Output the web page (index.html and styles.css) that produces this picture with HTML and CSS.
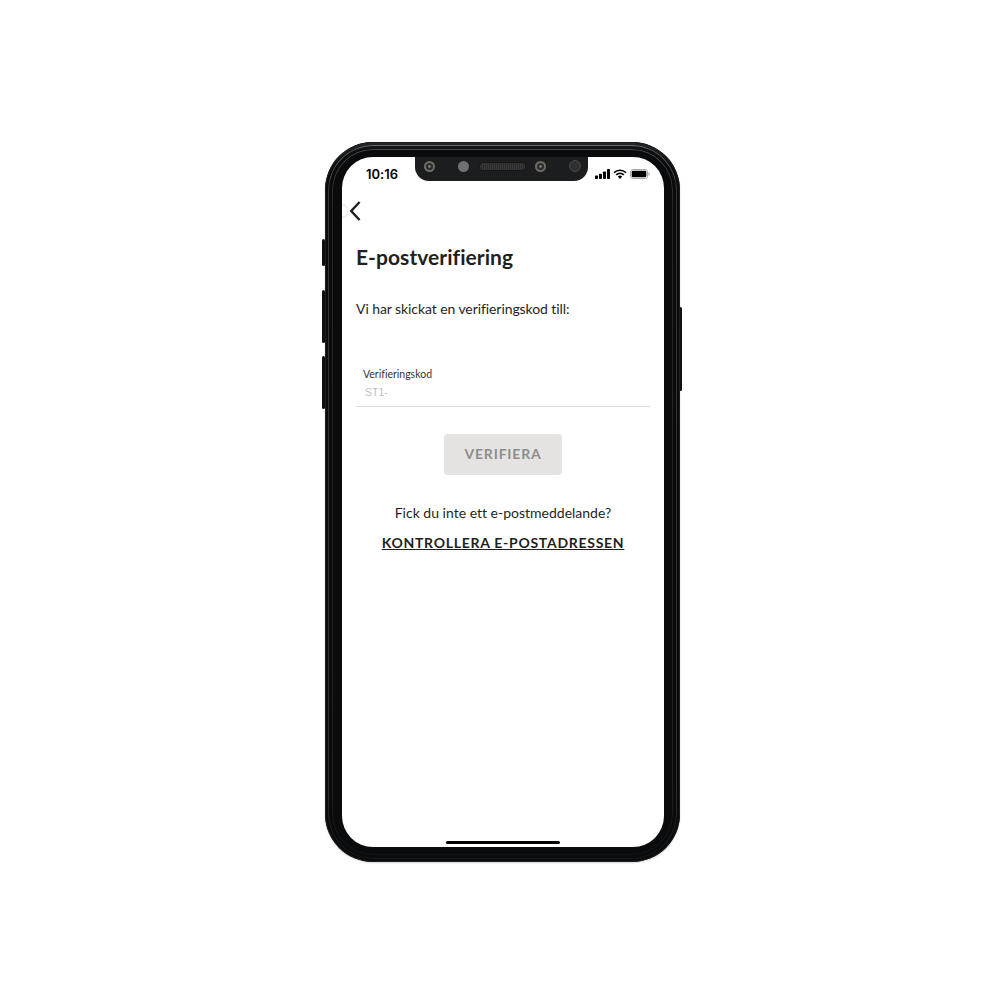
FILE: index.html
```html
<!DOCTYPE html>
<html lang="sv">
<head>
<meta charset="utf-8">
<title>E-postverifiering</title>
<link rel="stylesheet" href="styles.css">
</head>
<body>
<div class="phone">
  <span class="side-btn btn-a"></span>
  <span class="side-btn btn-b"></span>
  <span class="side-btn btn-c"></span>
  <span class="side-btn btn-d"></span>
  <div class="bezel">
    <div class="screen">
      <div class="notch">
        <span class="lens lens-ring"><i></i></span>
        <span class="lens lens-grey"></span>
        <span class="speaker"></span>
        <span class="lens lens-ring lens-ring-b"><i></i></span>
        <span class="lens lens-dark"></span>
      </div>
      <div class="status">
        <span class="time">10:16</span>
        <span class="status-icons">
          <svg width="15" height="10" viewBox="0 0 15 10"><rect x="0" y="6.5" width="3" height="3.5" rx=".7"/><rect x="4" y="4.7" width="3" height="5.3" rx=".7"/><rect x="8" y="2.5" width="3" height="7.5" rx=".7"/><rect x="12" y="0" width="3" height="10" rx=".7"/></svg>
          <svg width="14" height="10" viewBox="0 0 14 10"><path d="M7 10 4.8 7.6a3.2 3.2 0 0 1 4.4 0Z"/><path d="M1 3.6a8.8 8.8 0 0 1 12 0" fill="none" stroke="#000" stroke-width="1.6"/><path d="M3.2 5.9a5.6 5.6 0 0 1 7.6 0" fill="none" stroke="#000" stroke-width="1.6"/></svg>
          <svg width="20" height="10" viewBox="0 0 20 10"><rect x=".5" y=".5" width="17" height="9" rx="2.5" fill="none" stroke="#aaa"/><rect x="1.7" y="1.7" width="14.6" height="6.6" rx="1.4"/><rect x="18.4" y="3.3" width="1.2" height="3.4" rx=".6" fill="#aaa"/></svg>
        </span>
      </div>
      <div class="nav">
        <span class="back-ghost"></span>
        <svg class="back" width="12" height="20" viewBox="0 0 12 20"><path d="M10.6 1 2.2 10l8.4 9" fill="none" stroke="#1f1f21" stroke-width="2.4"/></svg>
      </div>
      <main class="content">
        <h1 class="title">E-postverifiering</h1>
        <p class="lead">Vi har skickat en verifieringskod till:</p>
        <div class="field">
          <label class="field-label">Verifieringskod</label>
          <div class="field-value">ST1-</div>
        </div>
        <div class="actions">
          <div class="btn">VERIFIERA</div>
          <p class="question">Fick du inte ett e-postmeddelande?</p>
          <a class="link">KONTROLLERA E-POSTADRESSEN</a>
        </div>
      </main>
      <div class="home"></div>
    </div>
  </div>
</div>
</body>
</html>
```
FILE: styles.css
```css
* { box-sizing: border-box; }
html, body { margin: 0; background: #fff; }
body { width: 1005px; height: 1005px; padding: 142px 0 0 325px; font-family: "Lato", "Liberation Sans", sans-serif; font-variant-ligatures: none; color: #1f1f21; }

.phone { position: relative; width: 355px; height: 720px; }
.bezel {
  position: relative;
  width: 100%; height: 100%;
  padding: 15px 16px 15px 17px;
  border-radius: 48px;
  background: #0a0b0c;
  box-shadow: inset 0 0 0 1px #1c1e20, inset 0 12px 5px -8px #2b2c2d, 0 1px 2px rgba(0,0,0,.18);
}
.bezel::before, .bezel::after {
  content: ""; position: absolute; border-style: solid; border-color: transparent;
  -webkit-mask: linear-gradient(#000 0 0) padding-box, linear-gradient(#000 0 0);
  -webkit-mask-composite: xor;
  mask-composite: exclude;
}
.bezel::before {
  inset: 3px; border-radius: 45px; border-width: 1.5px;
  background: linear-gradient(#6a6c6e, #35373a 6%, #2c3033 90%, #15171a) border-box;
}
.bezel::after {
  inset: 7px; border-radius: 41px; border-width: 1px;
  background: linear-gradient(#4a4b4c, #232527 8%, #202326 90%, #121416) border-box;
}
.side-btn { position: absolute; background: #111; border-radius: 1.5px; width: 3px; }
.btn-a { left: -3px; top: 97px; height: 27px; }
.btn-b { left: -3px; top: 148px; height: 53px; }
.btn-c { left: -3px; top: 214px; height: 53px; }
.btn-d { right: -2px; top: 165px; height: 84px; }

.screen {
  position: relative; height: 100%;
  display: flex; flex-direction: column;
  background: #fff; border-radius: 31px; overflow: hidden;
}
.notch {
  position: absolute; left: 73px; top: 0; width: 173px; height: 24px;
  display: flex; align-items: center; padding: 0 0 6px 9px;
  background: #1c1d1e; border-radius: 0 0 14px 14px;
}
.lens { display: block; flex: none; width: 11px; height: 11px; border-radius: 50%; }
.lens-ring { background: #6d6d67; padding: 2px; }
.lens-ring i { display: block; width: 7px; height: 7px; border-radius: 50%; background: radial-gradient(circle, #777 0 1px, #2b2b2b 1.6px); }
.lens-ring-b { margin-left: 10px; }
.lens-grey { background: #6f7072; margin-left: 23px; }
.lens-dark { width: 12px; height: 12px; background: #303133; border: 1px solid #48494b; margin-left: 23px; }
.speaker { flex: none; width: 45px; height: 7px; border-radius: 3.5px; margin-left: 11px; background: repeating-linear-gradient(90deg, #3a3a3a 0 1px, #2a2a2a 1px 2px); box-shadow: 0 0 0 .5px #111; }

.status { height: 35px; padding: 10px 14px 0 24px; display: flex; justify-content: space-between; align-items: flex-start; }
.time { font-family: "Inter", sans-serif; font-size: 13px; font-weight: 600; line-height: 14px; color: #000; }
.status-icons { display: flex; gap: 3px; align-items: center; padding-top: 2px; }
.status-icons svg { display: block; fill: #000; }

.nav { position: relative; height: 52px; padding: 9px 0 0 7px; }
.back { display: block; }
.back-ghost { position: absolute; left: -6px; top: 12px; width: 12px; height: 14px; border-radius: 50%; border: 1px solid #e8e8e8; }

.content { padding: 0 14px; }
.title { margin: 0; font-size: 21px; line-height: 26px; font-weight: 700; letter-spacing: .05px; color: #1f1f21; }
.lead { margin: 29px 0 0; font-size: 14px; line-height: 20px; letter-spacing: -.08px; }
.field { margin-top: 48px; height: 40px; border-bottom: 1px solid #dcdcdc; padding-left: 7px; }
.field-label { display: block; font-size: 10.5px; line-height: 14px; color: #333; }
.field-value { margin: 4px 0 0 2px; font-family: "Liberation Sans", sans-serif; font-size: 10.5px; line-height: 14px; color: #bdbdbd; }

.actions { display: flex; flex-direction: column; align-items: center; margin-top: 27px; }
.btn { width: 118px; height: 41px; padding-bottom: 2px; border-radius: 4px; background: #e4e3e1; color: #8d8d8b; font-size: 14px; font-weight: 700; letter-spacing: .8px; display: flex; align-items: center; justify-content: center; }
.question { margin: 28px 0 0; font-size: 14px; line-height: 20px; }
.link { margin-top: 10px; font-size: 14px; line-height: 20px; font-weight: 700; letter-spacing: .72px; text-decoration: underline; color: #1f1f21; }

.home { position: absolute; left: 104px; bottom: 3px; width: 114px; height: 3px; border-radius: 2px; background: #000; }
```
